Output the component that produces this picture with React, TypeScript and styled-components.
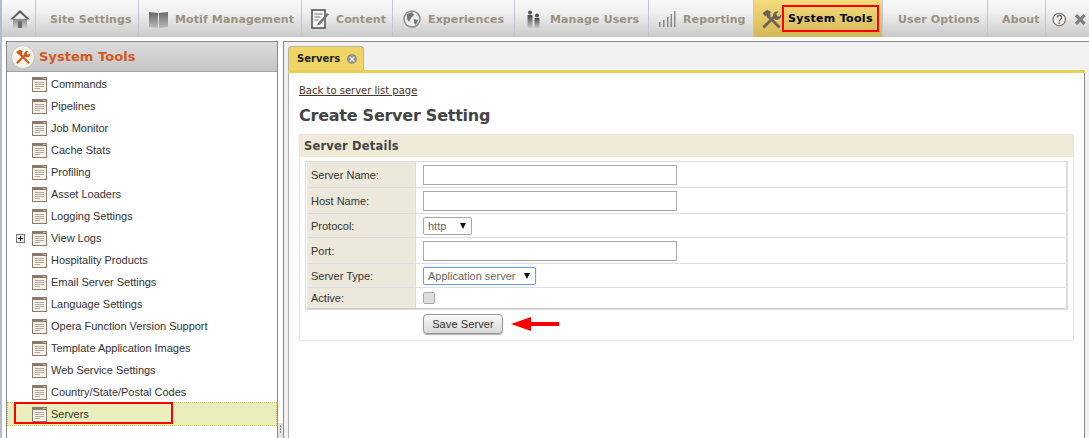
import React from "react";
import styled, { createGlobalStyle } from "styled-components";

const GlobalStyle = createGlobalStyle`
  html, body { margin: 0; padding: 0; background: #fff; }
  body { font-family: "Liberation Sans", Arial, sans-serif; overflow: hidden; }
`;

const Page = styled.div`
  width: 1089px;
  height: 438px;
  overflow: hidden;
  display: flex;
  flex-direction: column;
  border-left: 2px solid #b4bccb;
  box-sizing: border-box;
`;

/* top navigation */
const Nav = styled.nav`
  display: flex;
  height: 37px;
  background: linear-gradient(#f8f8f8 0%, #f0f0f0 35%, #c9c9c9 100%);
  flex: none;
`;

const NavItem = styled.div<{ $w: number; $pad: number; $gap?: number; $active?: boolean; $last?: boolean }>`
  width: ${(p) => p.$w}px;
  box-sizing: border-box;
  flex: none;
  display: flex;
  align-items: center;
  gap: ${(p) => p.$gap ?? 6}px;
  padding-left: ${(p) => p.$pad}px;
  padding-top: 1px;
  white-space: nowrap;
  border-right: ${(p) => (p.$last ? "none" : "1px solid #c4c4d4")};
  background: ${(p) => (p.$active ? "linear-gradient(#f5dc7e, #d3b658)" : "transparent")};
  font: bold 11px "DejaVu Sans", Verdana, sans-serif;
  letter-spacing: 0.12px;
  color: ${(p) => (p.$active ? "#000" : "#9a9180")};
`;

const Marked = styled.span`
  border: 2px solid #f00;
  width: 97px;
  height: 27px;
  line-height: 23px;
  padding-left: 4px;
  box-sizing: border-box;
  display: inline-block;
  margin-top: -1px;
  letter-spacing: 0.3px;
`;

const Body = styled.div`
  flex: 1;
  display: flex;
  padding-top: 4px;
  min-height: 0;
`;

/* left tree */
const Side = styled.aside`
  width: 272px;
  margin-left: 4px;
  flex: none;
  border: 1px solid #8a8a8a;
  border-bottom: none;
  background: #fff;
  box-sizing: border-box;
`;

const SideHead = styled.div`
  height: 30px;
  box-sizing: border-box;
  border-bottom: 1px solid #a0a0a0;
  background: linear-gradient(#dcdcdc, #c6c6c6);
  display: flex;
  align-items: center;
  gap: 5px;
  padding-left: 5px;
  font: bold 13px "DejaVu Sans", Verdana, sans-serif;
  letter-spacing: 0.05px;
  color: #d4581c;
`;

const Badge = styled.span`
  width: 22px;
  height: 22px;
  border-radius: 50%;
  background: #f7f3ea;
  display: flex;
  align-items: center;
  justify-content: center;
  box-shadow: 0 0 1px #999;
`;

const Tree = styled.ul`
  list-style: none;
  margin: 0;
  padding: 1px 0 0;
`;

const Row = styled.li<{ $selected?: boolean }>`
  position: relative;
  height: 22px;
  display: flex;
  align-items: center;
  gap: 4px;
  padding-left: 25px;
  box-sizing: border-box;
  font-size: 11px;
  letter-spacing: -0.02px;
  color: #333;
  ${(p) =>
    p.$selected
      ? "background:#e9eebc;outline:1px dotted #d9c860;outline-offset:-1px;height:24px;padding-top:1px;padding-bottom:1px;margin-top:-1px;"
      : ""}
`;

const Expander = styled.span`
  position: absolute;
  left: 9px;
  top: 7px;
  width: 7px;
  height: 7px;
  border: 1px solid #777;
  background: #eee;
  display: block;
  &::before {
    content: "";
    position: absolute;
    left: 1px;
    right: 1px;
    top: 3px;
    height: 1px;
    background: #000;
  }
  &::after {
    content: "";
    position: absolute;
    top: 1px;
    bottom: 1px;
    left: 3px;
    width: 1px;
    background: #000;
  }
`;

const RowMark = styled.span`
  position: absolute;
  left: 7px;
  top: 0;
  width: 159px;
  height: 22px;
  border: 2px solid #f00;
  box-sizing: border-box;
`;

const Splitter = styled.div`
  width: 5px;
  flex: none;
  display: flex;
  align-items: flex-end;
  justify-content: center;
`;

const Grip = styled.span`
  width: 5px;
  height: 15px;
  background: #e4e4e4;
  display: flex;
  flex-direction: column;
  align-items: center;
  gap: 1px;
  padding-top: 2px;
  box-sizing: border-box;
  i {
    width: 1px;
    height: 2px;
    background: #888;
  }
`;

/* right panel */
const Main = styled.main`
  width: 806px;
  flex: none;
  border-left: 1px solid #8a8a8a;
  border-top: 1px solid #8a8a8a;
  box-sizing: border-box;
  background: #f1f1f1;
  padding: 0 4px;
  display: flex;
  flex-direction: column;
`;

const TabBar = styled.div`
  height: 31px;
  box-sizing: border-box;
  border-bottom: 3px solid #e8cf58;
  padding-top: 4px;
  flex: none;
`;

const Tab = styled.div`
  width: 76px;
  height: 24px;
  box-sizing: border-box;
  background: #efd466;
  border: 1px solid #b9b49a;
  border-bottom: none;
  border-radius: 4px 4px 0 0;
  display: flex;
  align-items: center;
  gap: 7px;
  padding-left: 8px;
  font: bold 10px "DejaVu Sans", Verdana, sans-serif;
  color: #222;
`;

const CloseDot = styled.span`
  width: 10px;
  height: 10px;
  border-radius: 50%;
  background: #8f8f8f;
  color: #fff;
  font-size: 9px;
  line-height: 10px;
  text-align: center;
`;

const Content = styled.div`
  flex: 1;
  background: #fff;
  border-left: 1px solid #b0b0b0;
  border-right: 1px solid #8a8a8a;
  padding: 11px 0 0 10px;
`;

const BackLink = styled.a`
  display: block;
  font: 10px "DejaVu Sans", Verdana, sans-serif;
  color: #4a3320;
  text-decoration: underline;
  height: 14px;
  line-height: 14px;
`;

const Title = styled.h1`
  margin: 6px 0 6px;
  font: bold 16px "DejaVu Sans", Verdana, sans-serif;
  letter-spacing: -0.25px;
  color: #444;
  height: 24px;
  line-height: 24px;
  white-space: nowrap;
`;

const Box = styled.section`
  border: 1px solid #e6e6e6;
  width: 775px;
  height: 207px;
  box-sizing: border-box;
`;

const BoxHead = styled.h2`
  margin: 0;
  height: 22px;
  padding-left: 4px;
  background: #efe9d8;
  font: bold 11.5px/22px "DejaVu Sans", Verdana, sans-serif;
  letter-spacing: 0.2px;
  color: #444;
`;

const FormTable = styled.div`
  margin: 4px 5px 0 5px;
  border: 1px solid #ddd;
  border-right-width: 2px;
  padding: 0 1px;
  display: flex;
  flex-direction: column;
`;

const FormRow = styled.div<{ $h: number }>`
  height: ${(p) => p.$h}px;
  display: grid;
  grid-template-columns: 109px 1fr;
  border-bottom: 1px solid #ddd;
  box-sizing: border-box;
  &:last-child {
    border-bottom: 1px solid #ccc;
  }
`;

const Label = styled.div`
  background: #ece9dc;
  border-right: 1px solid #ddd;
  display: flex;
  align-items: center;
  padding-left: 4px;
  font-size: 11px;
  color: #333;
`;

const Field = styled.div`
  display: flex;
  align-items: center;
  padding-left: 7px;
`;

const TextBox = styled.div`
  width: 254px;
  height: 20px;
  box-sizing: border-box;
  border: 1px solid #a9a9a9;
  background: #fff;
`;

const Select = styled.div<{ $w: number; $focus?: boolean }>`
  width: ${(p) => p.$w}px;
  height: 18px;
  box-sizing: border-box;
  border: 1px solid ${(p) => (p.$focus ? "#6f9fe0" : "#a9a9a9")};
  box-shadow: ${(p) => (p.$focus ? "0 0 1px #6f9fe0" : "none")};
  border-radius: 2px;
  display: flex;
  align-items: center;
  justify-content: space-between;
  padding: 0 5px 0 4px;
  font-size: 11px;
  color: #666;
`;

const Caret = styled.span`
  width: 0;
  height: 0;
  border-left: 3.5px solid transparent;
  border-right: 3.5px solid transparent;
  border-top: 6px solid #111;
`;

const Check = styled.span`
  width: 12px;
  height: 12px;
  box-sizing: border-box;
  border: 1px solid #aaa;
  border-radius: 2px;
  background: #ddd;
`;

const Actions = styled.div`
  margin: 4px 0 0 123px;
  display: flex;
  align-items: center;
  gap: 8px;
`;

const SaveButton = styled.button`
  width: 80px;
  height: 20px;
  padding: 0;
  border: 1px solid #999;
  border-radius: 4px;
  background: linear-gradient(#fafafa, #d8d8d8);
  box-shadow: 0 1px 1px #aaa;
  font: 11px "Liberation Sans", Arial, sans-serif;
  letter-spacing: 0.1px;
  color: #333;
`;

const Doc = () => (
  <svg width="15" height="16" viewBox="0 0 15 16">
    <rect x="0.5" y="1.5" width="14" height="14" fill="#f6f2ec" stroke="#8c7a6a" />
    <path d="M1 1.5h9l1 1h3.5v1.5H1z" fill="#8a7868" />
    <path d="M3 6.5h9M3 8.5h9M3 10.5h9M3 12.5h5" stroke="#b3a89c" fill="none" />
  </svg>
);

const ToolsIcon = ({ size = 26, color = "#6b6253" }: { size?: number; color?: string }) => (
  <svg width={size} height={size} viewBox="0 0 26 26">
    <path d="M2 5l6-4 5 3-2 1 1 3-4 3-1-3-2 1z" fill={color} />
    <path d="M8 8l15 15" stroke={color} strokeWidth="3.4" />
    <path d="M3 23L17 9" stroke={color} strokeWidth="3.4" />
    <path d="M15 10c-1-4 2-8 7-7l-3 3 1 3 3 0 2-3c1 5-3 9-8 7z" fill={color} />
  </svg>
);

const HomeIcon = () => (
  <svg width="20" height="20" viewBox="0 0 20 20">
    <defs>
      <linearGradient id="hm" x1="0" y1="0" x2="0" y2="1">
        <stop offset="0" stopColor="#8a8a8a" />
        <stop offset="1" stopColor="#cfcfcf" />
      </linearGradient>
    </defs>
    <path d="M3 10h14v9H3z" fill="url(#hm)" />
    <path d="M10 1L0 10.5h2.5L10 4l7.5 6.5H20z" fill="#5f5f5f" />
    <rect x="8" y="12" width="4" height="7" fill="#6f6f6f" />
  </svg>
);

const BookIcon = () => (
  <svg width="19" height="17" viewBox="0 0 19 17">
    <defs>
      <linearGradient id="bk" x1="0" y1="0" x2="0" y2="1">
        <stop offset="0" stopColor="#666" />
        <stop offset="1" stopColor="#bbb" />
      </linearGradient>
    </defs>
    <path d="M0 1l9 1v15l-9-1zM10 2l9-1v15l-9 1z" fill="url(#bk)" />
  </svg>
);

const ContentIcon = () => (
  <svg width="19" height="20" viewBox="0 0 19 20">
    <rect x="1" y="1" width="13" height="18" fill="#f4f4f4" stroke="#555" strokeWidth="1.6" />
    <path d="M3.5 5h8M3.5 8h6M3.5 11h4" stroke="#777" />
    <path d="M7 14l9-10 2 1.5-9 10-3 1z" fill="#777" />
  </svg>
);

const GlobeIcon = () => (
  <svg width="18" height="18" viewBox="0 0 18 18">
    <circle cx="9" cy="9" r="8" fill="#ededed" stroke="#8a8a8a" strokeWidth="1.5" />
    <path d="M4 4l5-2 2 3-3 3-2 4-2-3zM11 9l4 1-2 5-2-2z" fill="#777" />
  </svg>
);

const UsersIcon = () => (
  <svg width="13" height="19" viewBox="0 0 13 19">
    <defs>
      <linearGradient id="us" x1="0" y1="0" x2="0" y2="1">
        <stop offset="0" stopColor="#444" />
        <stop offset="1" stopColor="#ccc" />
      </linearGradient>
    </defs>
    <circle cx="3" cy="2.5" r="2" fill="#555" />
    <circle cx="10" cy="5.5" r="2" fill="#555" />
    <rect x="0.5" y="5" width="5" height="13" rx="1" fill="url(#us)" />
    <rect x="7.5" y="8" width="5" height="10" rx="1" fill="url(#us)" />
  </svg>
);

const BarsIcon = () => (
  <svg width="18" height="18" viewBox="0 0 18 18">
    <path d="M1 12h1.5v5H1zM5 10h1.5v7H5zM9 7h1.5v10H9zM12.5 4H14v13h-1.5zM16 1h1.5v16H16z" fill="#8a8a8a" />
  </svg>
);

const items = [
  "Commands", "Pipelines", "Job Monitor", "Cache Stats", "Profiling", "Asset Loaders",
  "Logging Settings", "View Logs", "Hospitality Products", "Email Server Settings",
  "Language Settings", "Opera Function Version Support", "Template Application Images",
  "Web Service Settings", "Country/State/Postal Codes", "Servers",
];

export default function App() {
  return (
    <Page>
      <GlobalStyle />
      <Nav>
        <NavItem $w={34} $pad={8}><HomeIcon /></NavItem>
        <NavItem $w={103} $pad={14}>Site Settings</NavItem>
        <NavItem $w={163} $pad={10} $gap={7}><BookIcon />Motif Management</NavItem>
        <NavItem $w={91} $pad={9}><ContentIcon />Content</NavItem>
        <NavItem $w={122} $pad={10} $gap={7}><GlobeIcon />Experiences</NavItem>
        <NavItem $w={134} $pad={12} $gap={10}><UsersIcon />Manage Users</NavItem>
        <NavItem $w={105} $pad={9} $gap={7}><BarsIcon />Reporting</NavItem>
        <NavItem $w={129} $pad={7} $gap={0} $active><ToolsIcon size={21} /><Marked>System Tools</Marked></NavItem>
        <NavItem $w={105} $pad={15}>User Options</NavItem>
        <NavItem $w={58} $pad={14}>About</NavItem>
        <NavItem $w={41} $pad={6} $gap={8} $last>
          <svg width="15" height="15" viewBox="0 0 15 15">
            <circle cx="7.5" cy="7.5" r="6.5" fill="#f4f4f4" stroke="#7a6a5a" strokeWidth="1.2" />
            <path d="M5.5 5.5c0-3 4.5-3 4.5 0 0 2-2.5 2-2.5 4" stroke="#6b5a4a" strokeWidth="1.3" fill="none" />
            <circle cx="7.5" cy="11.3" r="0.9" fill="#6b5a4a" />
          </svg>
          <svg width="13" height="13" viewBox="0 0 13 13">
            <path d="M2 2l9 9M11 2l-9 9" stroke="#808080" strokeWidth="3.4" />
          </svg>
        </NavItem>
      </Nav>
      <Body>
        <Side>
          <SideHead>
            <Badge><ToolsIcon size={16} color="#d4581c" /></Badge>
            System Tools
          </SideHead>
          <Tree>
            {items.map((name) => (
              <Row key={name} $selected={name === "Servers"}>
                {name === "View Logs" && <Expander />}
                {name === "Servers" && <RowMark />}
                <Doc />
                {name}
              </Row>
            ))}
          </Tree>
        </Side>
        <Splitter>
          <Grip><i /><i /><i /></Grip>
        </Splitter>
        <Main>
          <TabBar>
            <Tab>Servers<CloseDot>×</CloseDot></Tab>
          </TabBar>
          <Content>
            <BackLink>Back to server list page</BackLink>
            <Title>Create Server Setting</Title>
            <Box>
              <BoxHead>Server Details</BoxHead>
              <FormTable>
                <FormRow $h={26}><Label>Server Name:</Label><Field><TextBox /></Field></FormRow>
                <FormRow $h={26}><Label>Host Name:</Label><Field><TextBox /></Field></FormRow>
                <FormRow $h={24}><Label>Protocol:</Label><Field><Select $w={49}>http<Caret /></Select></Field></FormRow>
                <FormRow $h={26}><Label>Port:</Label><Field><TextBox /></Field></FormRow>
                <FormRow $h={24}><Label>Server Type:</Label><Field><Select $w={113} $focus>Application server<Caret /></Select></Field></FormRow>
                <FormRow $h={21}><Label>Active:</Label><Field><Check /></Field></FormRow>
              </FormTable>
              <Actions>
                <SaveButton>Save Server</SaveButton>
                <svg width="48" height="14" viewBox="0 0 48 14">
                  <path d="M0 7L20 0v5h28v4H20v5z" fill="#f00" />
                </svg>
              </Actions>
            </Box>
          </Content>
        </Main>
      </Body>
    </Page>
  );
}
